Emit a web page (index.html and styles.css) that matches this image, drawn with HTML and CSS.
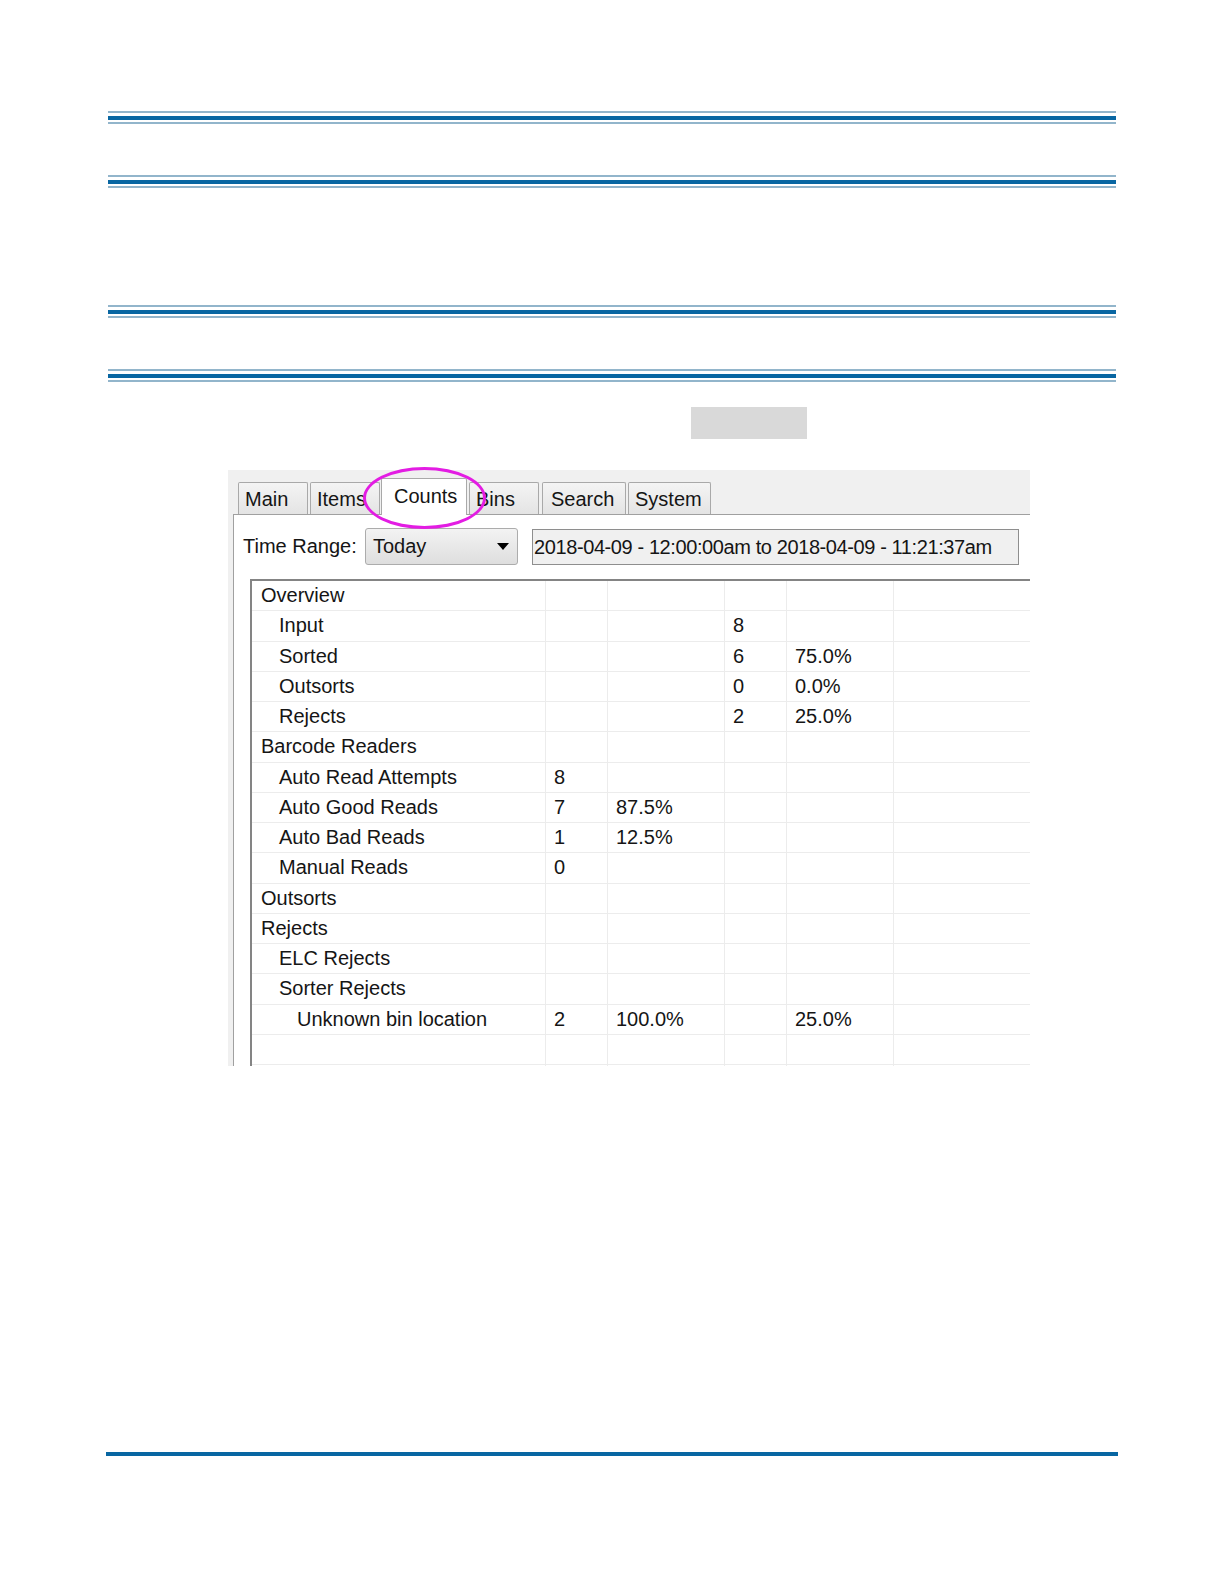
FILE: index.html
```html
<!DOCTYPE html>
<html lang="en">

<head>
    <meta charset="UTF-8">
    <title>Counts tab</title>
    <link rel="stylesheet" href="styles.css">
</head>

<body>
    <div class="page">
        <div class="rule"></div>
        <div class="rule rule-b"></div>
        <div class="rule rule-c"></div>
        <div class="rule rule-b"></div>

        <div class="blank-box"></div>

        <div class="shot">
            <div class="window">
                <div class="tabs">
                    <div class="tab tab-main">Main</div>
                    <div class="tab tab-items">Items</div>
                    <div class="tab tab-counts active">Counts</div>
                    <div class="tab tab-bins">Bins</div>
                    <div class="tab tab-search">Search</div>
                    <div class="tab tab-system">System</div>
                </div>

                <div class="panel">
                    <div class="toolbar">
                        <span class="label">Time Range:</span>
                        <div class="select">
                            <span>Today</span>
                            <span class="arrow"></span>
                        </div>
                        <div class="range">2018-04-09 - 12:00:00am to 2018-04-09 - 11:21:37am</div>
                    </div>

                    <div class="grid">
                        <div class="row"><span>Overview</span><span></span><span></span><span></span><span></span><span></span></div>
                        <div class="row"><span class="l1">Input</span><span></span><span></span><span>8</span><span></span><span></span></div>
                        <div class="row"><span class="l1">Sorted</span><span></span><span></span><span>6</span><span>75.0%</span><span></span></div>
                        <div class="row"><span class="l1">Outsorts</span><span></span><span></span><span>0</span><span>0.0%</span><span></span></div>
                        <div class="row"><span class="l1">Rejects</span><span></span><span></span><span>2</span><span>25.0%</span><span></span></div>
                        <div class="row"><span>Barcode Readers</span><span></span><span></span><span></span><span></span><span></span></div>
                        <div class="row"><span class="l1">Auto Read Attempts</span><span>8</span><span></span><span></span><span></span><span></span></div>
                        <div class="row"><span class="l1">Auto Good Reads</span><span>7</span><span>87.5%</span><span></span><span></span><span></span></div>
                        <div class="row"><span class="l1">Auto Bad Reads</span><span>1</span><span>12.5%</span><span></span><span></span><span></span></div>
                        <div class="row"><span class="l1">Manual Reads</span><span>0</span><span></span><span></span><span></span><span></span></div>
                        <div class="row"><span>Outsorts</span><span></span><span></span><span></span><span></span><span></span></div>
                        <div class="row"><span>Rejects</span><span></span><span></span><span></span><span></span><span></span></div>
                        <div class="row"><span class="l1">ELC Rejects</span><span></span><span></span><span></span><span></span><span></span></div>
                        <div class="row"><span class="l1">Sorter Rejects</span><span></span><span></span><span></span><span></span><span></span></div>
                        <div class="row"><span class="l2">Unknown bin location</span><span>2</span><span>100.0%</span><span></span><span>25.0%</span><span></span></div>
                        <div class="row"><span></span><span></span><span></span><span></span><span></span><span></span></div>
                        <div class="row"><span></span><span></span><span></span><span></span><span></span><span></span></div>
                    </div>
                </div>
            </div>

            <!-- highlight round the Counts tab -->
            <div class="circle"></div>
        </div>

        <div class="footer-rule"></div>
    </div>
</body>

</html>
```

FILE: styles.css
```css
body {
    margin: 0;
    background: #fff;
    font-family: 'Liberation Sans', Arial, sans-serif;
    color: #151515;
}

.page {
    padding-top: 111px;
    padding-bottom: 120px;
}

/* blue triple rules */
.rule {
    margin-left: 108px;
    width: 1008px;
    height: 4px;
    padding: 3px 0 2px;
    border-top: 2px solid #92b5cb;
    border-bottom: 2px solid #92b5cb;
    background: #0866a2;
    background-clip: content-box;
}

.rule-b {
    margin-top: 51px;
}

.rule-c {
    margin-top: 117px;
}

.blank-box {
    margin: 25px 0 0 691px;
    width: 116px;
    height: 32px;
    background: #d9d9d9;
}

/* screenshot of the app */
.shot {
    position: relative;
    margin: 31px 0 0 228px;
    width: 802px;
}

.window {
    height: 596px;
    overflow: hidden;
    background: #f0f0f0;
    display: flex;
    flex-direction: column;
    font-size: 20px;
}

.tabs {
    display: flex;
    align-items: flex-end;
    height: 44px;
    padding-left: 10px;
    flex-shrink: 0;
}

.tab {
    box-sizing: border-box;
    height: 32px;
    line-height: 28px;
    padding: 2px 0 0 6px;
    border: 1px solid #a9a9a9;
    border-bottom: none;
    border-radius: 2px 2px 0 0;
    background: linear-gradient(#f4f4f4, #e4e4e4);
    margin-right: 1px;
}

.tab-main { width: 70px; margin-right: 2px; }
.tab-items { width: 70px; }
.tab-counts { width: 86px; margin-right: 2px; }
.tab-bins { width: 70px; margin-right: 3px; }
.tab-search { width: 84px; margin-right: 2px; padding-left: 8px; }
.tab-system { width: 83px; }

.tab.active {
    position: relative;
    z-index: 1;
    height: 37px;
    margin-bottom: -1px;
    padding: 3px 0 0 12px;
    background: #fff;
}

.panel {
    flex: 1;
    margin-left: 5px;
    margin-right: -40px;
    border-left: 1px solid #a0a0a0;
    border-top: 1px solid #a0a0a0;
    background: #fff;
    padding: 13px 0 0 9px;
}

.toolbar {
    display: flex;
    align-items: center;
}

.label {
    width: 122px;
}

.select {
    box-sizing: border-box;
    width: 153px;
    height: 37px;
    display: flex;
    align-items: center;
    justify-content: space-between;
    padding: 0 8px 0 7px;
    border: 1px solid #acacac;
    border-radius: 3px;
    background: linear-gradient(#f3f3f3, #dedede);
}

.arrow {
    width: 0;
    height: 0;
    border-left: 6px solid transparent;
    border-right: 6px solid transparent;
    border-top: 7px solid #000;
}

.range {
    box-sizing: border-box;
    margin-left: 14px;
    width: 487px;
    height: 36px;
    line-height: 34px;
    padding-left: 1px;
    border: 1px solid #8e8e8e;
    background: #f0f0f0;
    letter-spacing: -0.4px;
    white-space: nowrap;
}

.grid {
    margin: 14px 0 0 7px;
    border-top: 2px solid #848484;
    border-left: 2px solid #848484;
}

.row {
    display: grid;
    grid-template-columns: 294px 62px 117px 62px 107px 400px;
    height: 30.25px;
    box-sizing: border-box;
    border-bottom: 1px solid #ececec;
}

.row span {
    box-sizing: border-box;
    border-right: 1px solid #ececec;
    line-height: 29px;
    padding-left: 8px;
    white-space: nowrap;
}

.row span:first-child {
    padding-left: 9px;
}

.row span.l1 {
    padding-left: 27px;
}

.row span.l2 {
    padding-left: 45px;
}

.circle {
    position: absolute;
    left: 135px;
    top: -3px;
    width: 123px;
    height: 62px;
    box-sizing: border-box;
    border: 3px solid #e31ce3;
    border-radius: 50%;
    z-index: 2;
}

.footer-rule {
    margin: 386px 0 0 106px;
    width: 1012px;
    height: 4px;
    background: #0866a2;
}
```
